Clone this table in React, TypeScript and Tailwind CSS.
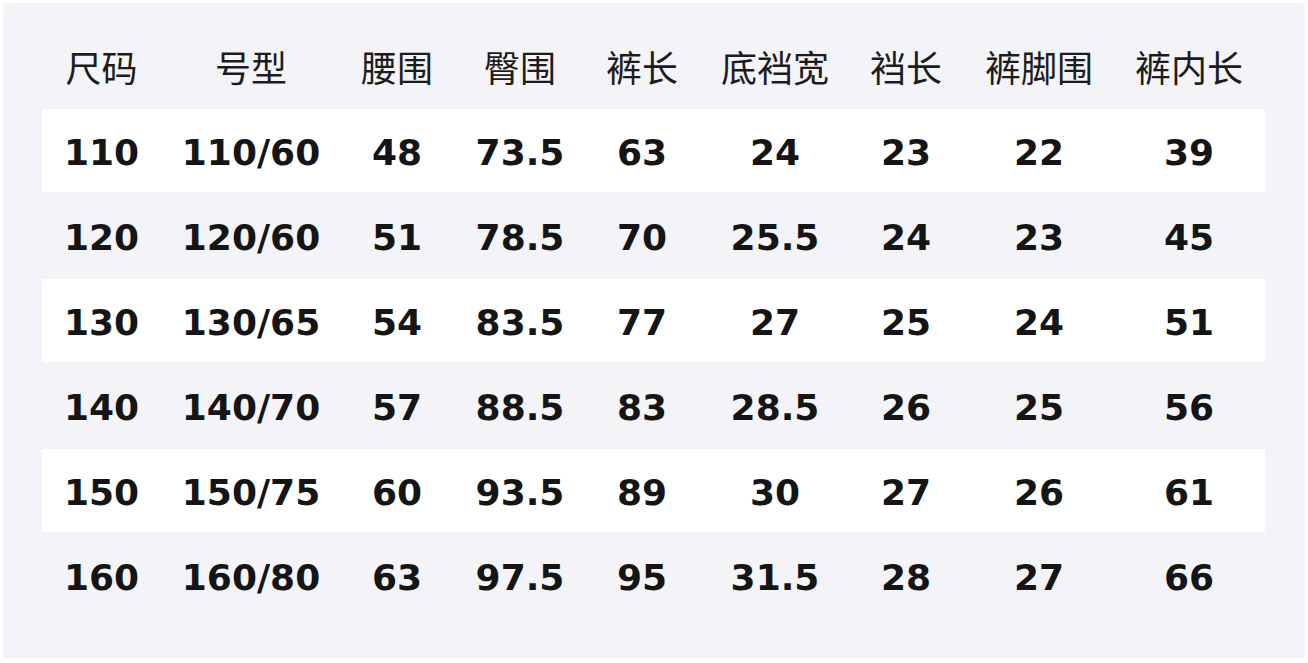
const headers = ["尺码", "号型", "腰围", "臀围", "裤长", "底裆宽", "裆长", "裤脚围", "裤内长"];

const rows = [
  ["110", "110/60", "48", "73.5", "63", "24", "23", "22", "39"],
  ["120", "120/60", "51", "78.5", "70", "25.5", "24", "23", "45"],
  ["130", "130/65", "54", "83.5", "77", "27", "25", "24", "51"],
  ["140", "140/70", "57", "88.5", "83", "28.5", "26", "25", "56"],
  ["150", "150/75", "60", "93.5", "89", "30", "27", "26", "61"],
  ["160", "160/80", "63", "97.5", "95", "31.5", "28", "27", "66"],
];

const cols = "grid grid-cols-[119px_180px_112px_134px_110px_156px_106px_160px_146px]";

export default function App() {
  return (
    <div className="w-[1308px] h-[663px] bg-white p-[3px] pb-[5px]">
      <div className="h-full bg-[#f3f3f8] pl-[39px] pr-[40px] pt-[21px] flex flex-col gap-[2px]">
        <div className={`${cols} h-[83px] items-center text-[#1c1c1c] text-[36px] font-['Noto_Sans_CJK_SC',sans-serif]`}>
          {headers.map((h, i) => (
            <div key={h} className={`text-center ${i === 8 ? "pr-[6px]" : ""}`}>
              {h}
            </div>
          ))}
        </div>
        {rows.map((r, ri) => (
          <div
            key={r[0]}
            className={`${cols} h-[83px] items-center pt-[4px] text-[#151515] text-[36px] font-bold font-['DejaVu_Sans',sans-serif] ${
              ri % 2 === 0 ? "bg-white" : ""
            }`}
          >
            {r.map((c, i) => (
              <div key={i} className={`text-center ${i === 8 ? "pr-[6px]" : ""}`}>
                {c}
              </div>
            ))}
          </div>
        ))}
      </div>
    </div>
  );
}
